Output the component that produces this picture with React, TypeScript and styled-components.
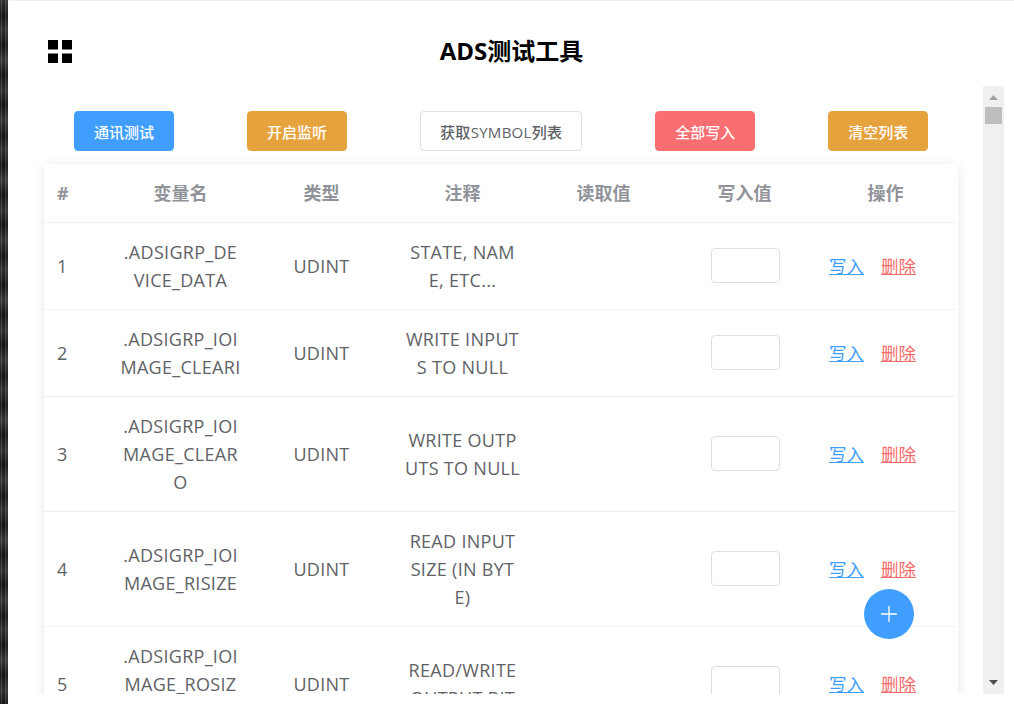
import React from "react";
import styled, { createGlobalStyle } from "styled-components";

const Global = createGlobalStyle`
  html, body { margin: 0; height: 100%; overflow: hidden; background: #fff; }
  body { font-family: "Open Sans", "Noto Sans CJK SC", sans-serif; }
  #root { height: 100%; }
`;

const Page = styled.div`
  display: flex;
  height: 704px;
`;

const Strip = styled.div`
  flex: 0 0 8px;
  background:
    linear-gradient(180deg, rgba(255,255,255,.1), rgba(0,0,0,.25) 25%, rgba(255,255,255,.08) 50%, rgba(0,0,0,.25) 75%, rgba(255,255,255,.1)) 0 0 / 8px 60px,
    linear-gradient(90deg, #222 0, #222 1px, #4a4a4a 1px, #4a4a4a 2px, #1c1c1c 2px, #1c1c1c 5px, #4a4a4a 5px, #4a4a4a 6px, #2a2a2a 6px, #2a2a2a 8px);
`;

const Main = styled.main`
  position: relative;
  flex: 1;
  min-width: 0;
  display: flex;
  flex-direction: column;
  padding: 0 10px 10px 1px;
  box-sizing: border-box;
`;

const Header = styled.header`
  position: relative;
  flex: 0 0 86px;
  box-sizing: border-box;
  margin-right: -10px;
  border-top: 1px solid #eeeeee;
  display: flex;
  align-items: center;
  justify-content: center;
  padding-top: 14px;
`;

const GridIcon = styled.svg`
  position: absolute;
  left: 39px;
  top: 39px;
  width: 24px;
  height: 23px;
  display: block;
`;

const Title = styled.h1`
  margin: 0;
  font-size: 24px;
  line-height: 30px;
  font-weight: 700;
  color: #000;
`;

const Body = styled.div`
  flex: 1;
  min-height: 0;
  display: flex;
`;

const Pane = styled.div`
  flex: 1;
  min-width: 0;
  overflow: hidden;
  padding-top: 25px;
`;

const Toolbar = styled.div`
  display: flex;
  gap: 73px;
  padding-left: 65px;
  margin-bottom: 13px;
`;

const Button = styled.button<{ $tone: "blue" | "orange" | "red" | "plain" }>`
  height: 40px;
  padding: 0 19px;
  min-width: 100px;
  border-radius: 4px;
  font: 500 15px "Open Sans", "Noto Sans CJK SC", sans-serif;
  letter-spacing: ${(p) => (p.$tone === "plain" ? "0.3px" : "0")};
  border: 1px solid
    ${(p) => ({ blue: "#409eff", orange: "#e6a23c", red: "#f96e71", plain: "#dcdfe6" })[p.$tone]};
  background: ${(p) => ({ blue: "#409eff", orange: "#e6a23c", red: "#f96e71", plain: "#fff" })[p.$tone]};
  color: ${(p) => (p.$tone === "plain" ? "#606266" : "#fff")};
`;

const Card = styled.div`
  margin-left: 35px;
  width: 914px;
  background: #fff;
  box-shadow: 0 2px 12px 0 rgba(0, 0, 0, 0.1);
  border-radius: 4px;
`;

const Table = styled.table`
  width: 912px;
  table-layout: fixed;
  border-collapse: collapse;
  font-size: 18px;
  line-height: 28px;
`;

const NumCol = styled.col`
  width: 66px;
`;

const Th = styled.th`
  padding: 15px 10px;
  font-weight: 700;
  color: #909399;
  text-align: center;
  border-bottom: 1px solid #ebeef5;
  &:first-child {
    text-align: left;
    padding-left: 13px;
  }
`;

const Td = styled.td`
  padding: 15px 10px;
  color: #606266;
  text-align: center;
  word-break: break-all;
  letter-spacing: 0.3px;
  white-space: pre-line;
  border-bottom: 1px solid #ebeef5;
  &:first-child {
    text-align: left;
    padding-left: 13px;
  }
`;

const ActionCell = styled(Td)`
  text-align: left;
  padding-left: 14px;
  padding-right: 0;
  letter-spacing: 0;
`;

const ValueInput = styled.input`
  width: 69px;
  height: 35px;
  box-sizing: border-box;
  display: block;
  margin: -1px 0 1px 27px;
  border: 1px solid #dcdfe6;
  border-radius: 4px;
  background: #fff;
`;

const Link = styled.a<{ $danger?: boolean }>`
  color: ${(p) => (p.$danger ? "#f56c6c" : "#409eff")};
  text-decoration: underline;
  font-size: 17.5px;
  margin-right: 17px;
`;

const Scrollbar = styled.div`
  flex: 0 0 21px;
  position: relative;
  background: #f0f0f0;
  display: flex;
  flex-direction: column;
  align-items: center;
`;

const Arrow = styled.svg`
  width: 9px;
  height: 5px;
  margin-top: 9px;
  display: block;
  flex: none;
`;

const Thumb = styled.div`
  width: 17px;
  height: 17px;
  margin-top: 7px;
  background: #bebebe;
  flex: none;
`;

const Spacer = styled.div`
  flex: 1;
`;

const DownArrow = styled(Arrow)`
  margin: 0 0 9px;
`;

const Fab = styled.button`
  position: absolute;
  left: 856px;
  top: 589px;
  width: 50px;
  height: 50px;
  border-radius: 50%;
  border: 0;
  padding: 0;
  background: #409eff;
  display: flex;
  align-items: center;
  justify-content: center;
`;

const rows = [
  [".ADSIGRP_DEVICE_DATA", "STATE, NAM\nE, ETC..."],
  [".ADSIGRP_IOIMAGE_CLEARI", "WRITE INPUT\nS TO NULL"],
  [".ADSIGRP_IOIMAGE_CLEARO", "WRITE OUTP\nUTS TO NULL"],
  [".ADSIGRP_IOIMAGE_RISIZE", "READ INPUT\nSIZE (IN BYT\nE)"],
  [".ADSIGRP_IOIMAGE_ROSIZE", "READ/WRITE\nOUTPUT BIT"],
];

export default function App() {
  return (
    <Page>
      <Global />
      <Strip />
      <Main>
        <Header>
          <GridIcon viewBox="0 0 24 23">
            <path d="M0 0h10v9.5H0zM14 0h10v9.5H14zM0 13.5h10V23H0zM14 13.5h10V23H14z" fill="#000" />
          </GridIcon>
          <Title>ADS测试工具</Title>
        </Header>
        <Body>
          <Pane>
            <Toolbar>
              <Button $tone="blue">通讯测试</Button>
              <Button $tone="orange">开启监听</Button>
              <Button $tone="plain">获取SYMBOL列表</Button>
              <Button $tone="red">全部写入</Button>
              <Button $tone="orange">清空列表</Button>
            </Toolbar>
            <Card>
              <Table>
                <colgroup>
                  <NumCol />
                  <col />
                  <col />
                  <col />
                  <col />
                  <col />
                  <col />
                </colgroup>
                <thead>
                  <tr>
                    <Th>#</Th>
                    <Th>变量名</Th>
                    <Th>类型</Th>
                    <Th>注释</Th>
                    <Th>读取值</Th>
                    <Th>写入值</Th>
                    <Th>操作</Th>
                  </tr>
                </thead>
                <tbody>
                  {rows.map(([name, note], i) => (
                    <tr key={name}>
                      <Td>{i + 1}</Td>
                      <Td>{name}</Td>
                      <Td>UDINT</Td>
                      <Td>{note}</Td>
                      <Td />
                      <Td>
                        <ValueInput />
                      </Td>
                      <ActionCell>
                        <Link>写入</Link>
                        <Link $danger>删除</Link>
                      </ActionCell>
                    </tr>
                  ))}
                </tbody>
              </Table>
            </Card>
          </Pane>
          <Scrollbar>
            <Arrow viewBox="0 0 9 5">
              <path d="M4.5 0L9 5H0z" fill="#a3a3a3" />
            </Arrow>
            <Thumb />
            <Spacer />
            <DownArrow viewBox="0 0 9 5">
              <path d="M0 0h9L4.5 5z" fill="#505050" />
            </DownArrow>
          </Scrollbar>
        </Body>
        <Fab aria-label="add">
          <svg width="16" height="16" viewBox="0 0 16 16">
            <path d="M8 0v16M0 8h16" stroke="#fff" strokeWidth="1.3" fill="none" />
          </svg>
        </Fab>
      </Main>
    </Page>
  );
}
